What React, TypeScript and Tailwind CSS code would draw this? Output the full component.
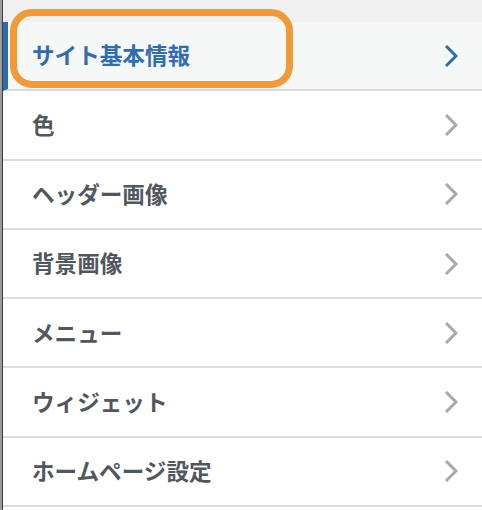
import React from "react";

const items = ["色", "ヘッダー画像", "背景画像", "メニュー", "ウィジェット", "ホームページ設定"];

function Chevron({ color }: { color: string }) {
  return (
    <svg width="14" height="22" viewBox="0 0 14 22" className="shrink-0">
      <polyline points="2,1 12,11 2,21" fill="none" stroke={color} strokeWidth="3" strokeLinejoin="miter" strokeLinecap="butt" />
    </svg>
  );
}

export default function App() {
  return (
    <div
      className="w-[482px] h-[510px] flex bg-white overflow-hidden"
      style={{ fontFamily: '"Noto Sans CJK JP", "Noto Sans", sans-serif' }}
    >
      <div className="w-[2px] h-full bg-[#9c9c9c]" />
      <div className="w-[1px] h-full bg-[#3d3d3d]" />
      <div className="relative flex-1 flex flex-col">
        <div className="h-[22px] bg-[#f0f0f1]" />
        <div className="h-[69.3px] flex items-center justify-between bg-[#f6f7f7] border-l-[5px] border-l-[#2c6db0] border-b-2 border-b-[#dcdcde] pl-[24px] pr-[24px]">
          <span className="text-[22.6px] font-bold text-[#2f6cb0] leading-none">サイト基本情報</span>
          <Chevron color="#2f6cb0" />
        </div>
        {items.map((t) => (
          <div
            key={t}
            className="h-[69.3px] flex items-center justify-between bg-white border-b-2 border-b-[#dcdcde] pl-[29px] pr-[24px]"
          >
            <span className="text-[22.6px] font-bold text-[#50575e] leading-none">{t}</span>
            <Chevron color="#a7aaad" />
          </div>
        ))}
        <div className="absolute left-[7px] top-[9px] w-[283px] h-[79px] rounded-[22px] border-[7px] border-[#f29a38] pointer-events-none" />
      </div>
    </div>
  );
}
